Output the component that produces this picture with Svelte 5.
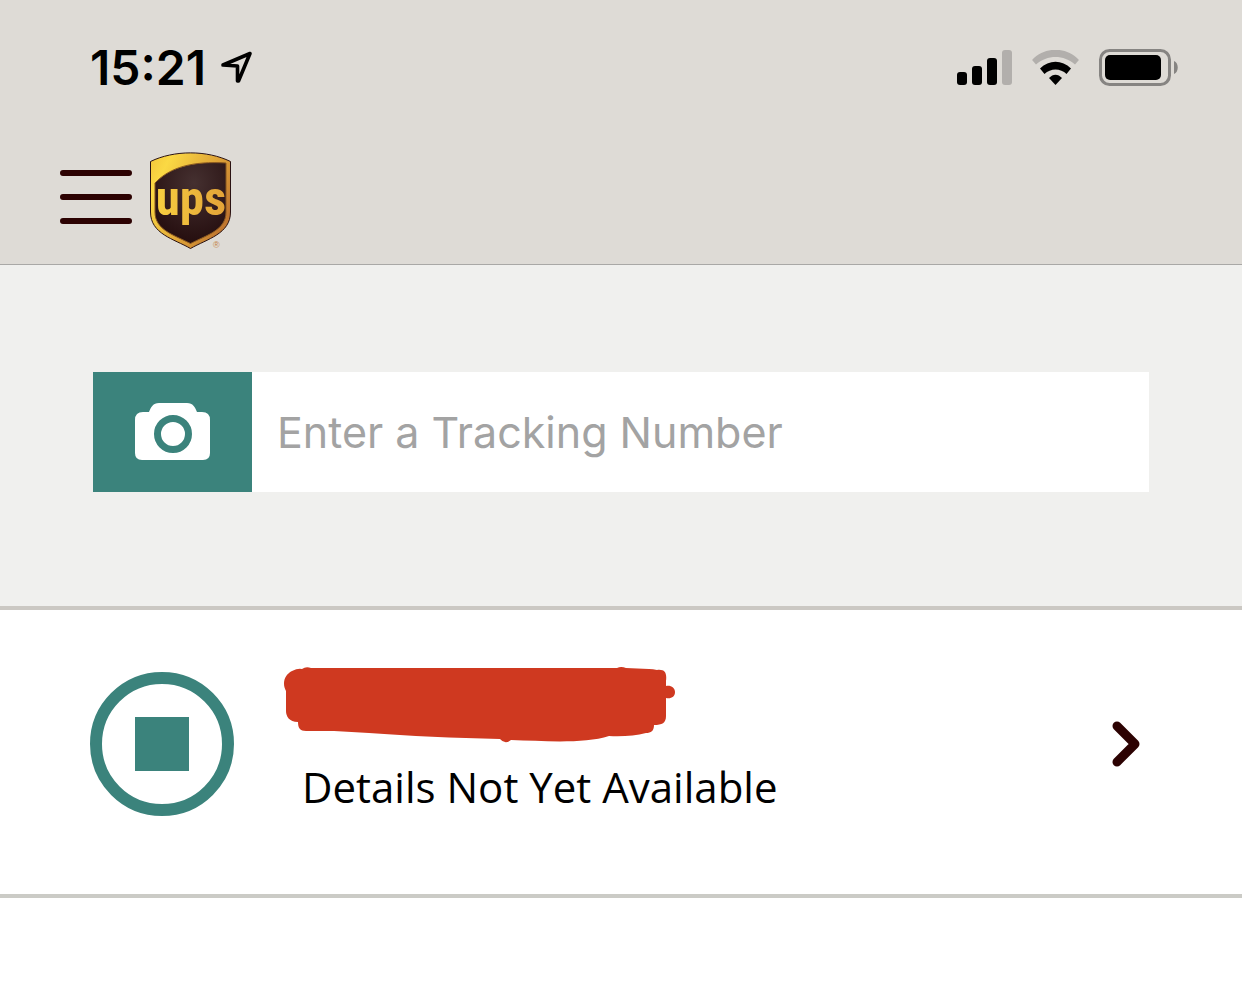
<script>
  let trackingNumber = $state('');
</script>

<div class="screen">
  <header>
    <div class="status">
      <div class="clock">
        <time>15:21</time>
        <svg class="location" width="32" height="34" viewBox="0 0 32 34" aria-hidden="true">
          <path d="M3 14 30 2.500 18.500 30H17.500V15Z" fill="none" stroke="#000" stroke-width="3.600" stroke-linejoin="round" />
        </svg>
      </div>
      <div class="indicators">
        <svg width="56" height="36" viewBox="0 0 56 36" aria-hidden="true">
          <rect x="0" y="22" width="10" height="13" rx="3" />
          <rect x="15" y="16" width="10" height="19" rx="3" />
          <rect x="30" y="8" width="10" height="27" rx="3" />
          <rect x="45" y="0" width="10" height="35" rx="3" fill="#b2afac" />
        </svg>
        <svg width="48" height="36" viewBox="0 0 48 36" aria-hidden="true">
          <path d="M0.500 9.500C13-3.500 34-3.500 46.500 9.500Q47 10 46.500 10.500L43 14.500C32 4.500 15 4.500 4 14.500L0.500 10.500Q0 10 0.500 9.500Z" fill="#b2afac" />
          <path d="M8 18.500C17 9.500 30 9.500 39 18.500L34.500 24C28.500 18 18.500 18 12.500 24Z" />
          <path d="M17 28C21 23.500 26 23.500 30 28L23.500 35Z" />
        </svg>
        <svg width="80" height="38" viewBox="0 0 80 38" aria-hidden="true">
          <rect x="1.500" y="1.500" width="69" height="34" rx="9" fill="none" stroke="#868482" stroke-width="3" />
          <rect x="6" y="6" width="56" height="25" rx="5" />
          <path d="M75 12C80 14 80 23 75 25Z" fill="#868482" />
        </svg>
      </div>
    </div>
    <nav>
      <button class="menu" aria-label="Menu">
        <svg width="72" height="54" viewBox="0 0 72 54" aria-hidden="true">
          <path d="M3 3H69M3 27H69M3 51H69" stroke="#2c0202" stroke-width="6" stroke-linecap="round" />
        </svg>
      </button>
      <a class="logo" href="#home">
        <svg width="82" height="98" viewBox="0 0 82 98">
          <defs>
            <linearGradient id="gold" x1="0" y1="0" x2="1" y2="0.600">
              <stop offset="0" stop-color="#f3c43a" />
              <stop offset="0.200" stop-color="#fbd944" />
              <stop offset="0.650" stop-color="#dfa437" />
              <stop offset="1" stop-color="#c07730" />
            </linearGradient>
            <radialGradient id="brown" cx="0.550" cy="0.250" r="0.700">
              <stop offset="0" stop-color="#453030" />
              <stop offset="1" stop-color="#271011" />
            </radialGradient>
            <linearGradient id="letters" x1="0" y1="0" x2="1" y2="0">
              <stop offset="0" stop-color="#f8cf40" />
              <stop offset="1" stop-color="#e2a238" />
            </linearGradient>
          </defs>
          <path d="M0.500 9.500C24-2 57-2 80.500 9.500V60C80.500 82 57 87 40.500 96.500C24 87 0.500 82 0.500 60Z" fill="url(#gold)" stroke="#2a1213" />
          <path d="M5 31C20 15 43 9 76 11V60C76 78 57 83 40.500 91.500C24 83 5 78 5 60Z" fill="url(#brown)" stroke="#875620" stroke-width="1" />
          <text class="wordmark" x="41" y="63" text-anchor="middle" fill="url(#letters)">ups</text>
          <text class="registered" x="63" y="96">®</text>
        </svg>
      </a>
    </nav>
  </header>

  <main>
    <form class="search" onsubmit={(event) => event.preventDefault()}>
      <div class="field">
        <button type="button" class="scan" aria-label="Scan a label">
          <svg width="76" height="58" viewBox="0 0 76 58" aria-hidden="true">
            <path d="M8 9H14C16 4 18 0 24 0H52C58 0 60 4 62 9H67Q75 9 75 17V50Q75 57 68 57H7Q0 57 0 50V17Q0 9 8 9Z" fill="#fff" />
            <circle cx="38" cy="31" r="15.500" fill="none" stroke="#3b837c" stroke-width="7" />
          </svg>
        </button>
        <input type="text" aria-label="Enter a Tracking Number" placeholder="Enter a Tracking Number" bind:value={trackingNumber} />
      </div>
    </form>

    <a class="shipment" href="#details">
      <span class="state"></span>
      <span class="summary">
        <svg class="redaction" width="392" height="76" viewBox="0 0 392 76" aria-hidden="true">
          <path d="M8 4Q14 1 18 2Q22-1 27 1H333Q337-1 342 1L365 2Q369 2 373 3C381 2 383 6 382 14V19C387 18 391 21 391 25C391 30 387 32 382 31V49C382 56 378 58 370 58C370 64 367 66 362 66Q346 70 325 69C300 77 260 74 227 73Q221 78 216 72C170 71 125 69 85 66L50 64H22C16 64 14 61 14 55C5 55 2 49 2 44V24C-2 17 0 8 8 4Z" fill="#cf3920" />
        </svg>
        <span class="message">Details Not Yet Available</span>
      </span>
      <svg class="chevron" width="28" height="46" viewBox="0 0 28 46" aria-hidden="true">
        <path d="M5 5 23 23 5 41" fill="none" stroke="#2c0202" stroke-width="9" stroke-linecap="round" stroke-linejoin="round" />
      </svg>
    </a>
  </main>
</div>

<style>
  :global(body) {
    margin: 0;
    background: #fff;
  }
  .screen {
    color: #000;
    font-family: Inter, sans-serif;
  }
  svg {
    display: block;
    flex: none;
  }
  button {
    border: 0;
    padding: 0;
    background: none;
    cursor: pointer;
  }
  header {
    background: #dedbd6;
    border-bottom: 1px solid #a9a8a6;
  }
  .status {
    display: flex;
    align-items: center;
    justify-content: space-between;
    height: 136px;
    padding: 0 63px 0 90px;
  }
  .clock,
  .indicators {
    display: flex;
    align-items: center;
  }
  .clock {
    gap: 14px;
  }
  .indicators {
    gap: 19px;
  }
  time {
    font-size: 48px;
    font-weight: 600;
    line-height: 60px;
  }
  nav {
    display: flex;
    align-items: flex-start;
    gap: 18px;
    padding: 16px 60px 14px;
  }
  .menu {
    padding: 18px 0;
  }
  .wordmark {
    font: 700 49px "Roboto Condensed", Roboto, sans-serif;
  }
  .registered {
    font: 9px "Liberation Sans", sans-serif;
    fill: #c58445;
  }
  .search {
    padding: 107px 93px 114px;
    background: #f0f0ee;
    border-bottom: 4px solid #cbc8c3;
  }
  .field {
    display: flex;
    height: 120px;
    background: #fff;
  }
  .scan {
    display: grid;
    place-items: center;
    flex: none;
    width: 159px;
    background: #3b837c;
  }
  input {
    flex: 1;
    min-width: 0;
    border: 0;
    padding: 0 25px;
    background: #fff;
    color: #000;
    font: 400 43px Inter, sans-serif;
  }
  input::placeholder {
    color: #a3a3a3;
    opacity: 1;
  }
  .shipment {
    display: flex;
    align-items: center;
    padding: 57px 102px 73px 90px;
    border-bottom: 4px solid #cbcbc6;
    color: inherit;
    text-decoration: none;
  }
  .state {
    display: grid;
    place-items: center;
    flex: none;
    box-sizing: border-box;
    width: 144px;
    height: 144px;
    border: 12px solid #3b837c;
    border-radius: 50%;
  }
  .state::before {
    content: "";
    width: 54px;
    height: 54px;
    background: #3b837c;
  }
  .summary {
    flex: 1;
    margin-left: 50px;
    padding-bottom: 4px;
  }
  .message {
    display: block;
    margin: 14px 0 0 18px;
    font: 400 42px/60px "Open Sans", sans-serif;
  }
</style>
